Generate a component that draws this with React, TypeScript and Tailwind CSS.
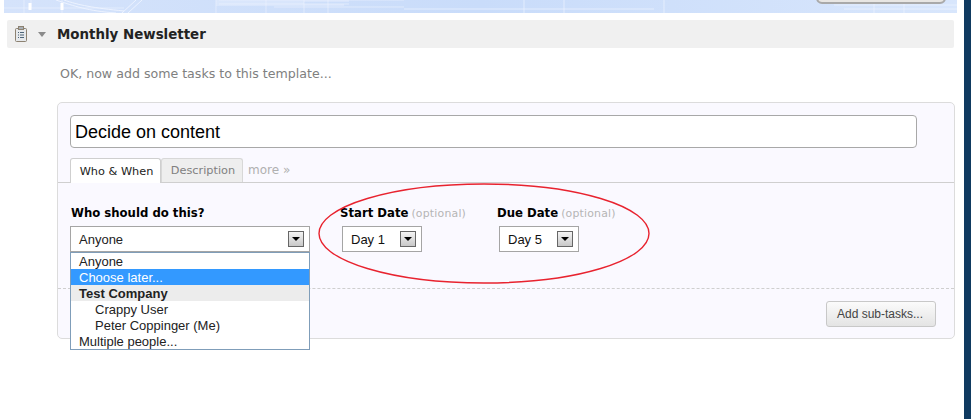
const verdana = "font-['DejaVu_Sans',sans-serif]";
const arial = "font-['Liberation_Sans',Arial,sans-serif]";

const Arrow = () => (
	<span className="flex h-[16px] w-[16px] items-center justify-center border border-[#666] bg-gradient-to-b from-[#f4f4f4] to-[#c8c8c8]">
		<span className="h-0 w-0 border-x-[4px] border-t-[4px] border-x-transparent border-t-black" />
	</span>
);

const TemplateIcon = () => (
	<svg width="14" height="16" viewBox="0 0 14 16" className="ml-[7px]" fill="none">
		<rect x="1.5" y="2.5" width="11" height="13" rx="1" fill="#e6e9ec" stroke="#8d8272" />
		<rect x="4.5" y="0.5" width="5" height="3" fill="#a9b0b6" stroke="#8d8272" />
		<path d="M4 6.5h1M6 6.5h4M4 9h1M6 9h4M4 11.5h1M6 11.5h4" stroke="#4d6478" />
	</svg>
);

const Banner = () => (
	<div className="relative ml-[4px] h-[13px] w-[953px] overflow-hidden bg-gradient-to-r from-[#d5e3fb] via-[#c9dcfa] to-[#d8e6fc]">
		<svg width="953" height="13" className="absolute inset-0" fill="none" stroke="#eef4ff" strokeWidth="1">
			<path d="M0 8H120M20 0v13M27 0v8M58 0v13M212 0v13M262 0v13M300 0v13M324 0v13M215 4H345M215 0H400M270 7H400" strokeOpacity="0.6" />
			<path d="M52 0C70 6 84 11 112 13M60 0C74 5 90 8 120 11M118 13L132 0M124 13L138 0" strokeOpacity="0.9" />
			<path d="M26 3v7M58 3v7" strokeWidth="3" stroke="#ffffff" />
			<path d="M212 1H345M212 3H300M212 5H340M400 9H650M520 0v13M560 0v13M660 13V0M830 5H953M840 9H953M870 0v13M900 0v13" strokeOpacity="0.7" />
		</svg>
		<div className="absolute right-[11px] top-[-10px] h-[14px] w-[130px] rounded-[6px] border-2 border-[#a9a9a9] bg-[#e8e6e3]" />
	</div>
);

const DateField = ({ label, value }: { label: string; value: string }) => (
	<div>
		<div className={`flex items-baseline gap-[3px] whitespace-nowrap text-[11.7px] font-bold leading-[15px] text-black ${verdana}`}>
			{label}
			<span className="text-[10.9px] font-normal tracking-[0.2px] text-[#b5b5b5]">(optional)</span>
		</div>
		<div className="ml-[2px] mt-[5px] flex h-[26px] w-[80px] items-center justify-between border border-[#a5a5a5] bg-white pl-[8px] pr-[5px]">
			<span className={`pt-[1px] text-[13px] text-[#111] ${arial}`}>{value}</span>
			<Arrow />
		</div>
	</div>
);

const menuRow = "h-[16px] leading-[18px]";

const AssigneeMenu = () => (
	<ul className={`absolute left-[70px] top-[252px] z-10 w-[240px] border border-[#7f9db9] bg-white text-[13px] text-[#222] ${arial}`}>
		<li className={`${menuRow} pl-[8px]`}>Anyone</li>
		<li className={`${menuRow} bg-[#3399ff] pl-[8px] text-white`}>Choose later...</li>
		<li className={`${menuRow} bg-[#ececec] pl-[8px] font-bold`}>Test Company</li>
		<li className={`${menuRow} pl-[24px]`}>Crappy User</li>
		<li className={`${menuRow} pl-[24px]`}>Peter Coppinger (Me)</li>
		<li className={`${menuRow} pl-[8px]`}>Multiple people...</li>
	</ul>
);

const App = () => {
	return (
		<div className="relative flex h-[419px] w-[971px] overflow-hidden bg-white">
			<main className="w-[964px]">
				<Banner />

				<div className="ml-[7px] mt-[7px] flex h-[28px] w-[947px] items-center rounded-[2px] bg-[#f0f0f0]">
					<TemplateIcon />
					<span className="ml-[10px] h-0 w-0 border-x-[4px] border-t-[5px] border-x-transparent border-t-[#8a8a8a]" />
					<h1 className={`ml-[11px] pt-[3px] text-[13.4px] font-bold text-[#222] ${verdana}`}>Monthly Newsletter</h1>
				</div>

				<p className={`ml-[60px] mt-[18px] text-[12.6px] leading-[15px] text-[#808080] ${verdana}`}>
					OK, now add some tasks to this template...
				</p>

				<section className="ml-[57px] mt-[21px] h-[237px] w-[898px] rounded-[5px] border border-[#dcdcdc] bg-[#faf9ff]">
					<input
						readOnly
						value="Decide on content"
						className={`ml-[12px] mt-[12px] block h-[33px] w-[847px] rounded-[4px] border border-[#a8a8a8] bg-white px-[4px] pt-[2px] text-[18px] text-black ${arial}`}
					/>

					<div className="mt-[10px] flex h-[25px] items-end border-b border-[#cfcfcf] pl-[12px]">
						<div className={`z-[1] -mb-px flex h-[25px] w-[91px] items-center justify-center rounded-t-[3px] border border-b-0 border-[#cfcfcf] bg-white pl-[2px] pt-[2px] text-[11.3px] text-[#222] ${verdana}`}>
							Who &amp; When
						</div>
						<div className={`flex h-[24px] w-[82px] items-center justify-center rounded-t-[3px] border border-b-0 border-[#d8d8d8] bg-[#eeeeee] pl-[2px] pt-[2px] text-[11.3px] text-[#808080] ${verdana}`}>
							Description
						</div>
						<span className={`ml-[5px] pb-[3px] text-[12px] font-medium text-[#b0b0b0] ${verdana}`}>more »</span>
					</div>

					<div className="flex pl-[12px] pt-[23px]">
						<div className="w-[270px]">
							<div className={`pl-[1px] text-[11.7px] font-bold leading-[15px] text-black ${verdana}`}>Who should do this?</div>
							<div className="mt-[5px] flex h-[26px] w-[240px] items-center justify-between border border-[#a5a5a5] bg-white pl-[8px] pr-[5px]">
								<span className={`pt-[1px] text-[13px] text-[#222] ${arial}`}>Anyone</span>
								<Arrow />
							</div>
						</div>
						<div className="w-[157px]">
							<DateField label="Start Date" value="Day 1" />
						</div>
						<DateField label="Due Date" value="Day 5" />
					</div>

					<div className="mt-[36px] border-t border-dashed border-[#cfcfcf]" />

					<div className="mt-[12px] flex justify-end pr-[18px]">
						<button className={`h-[26px] w-[110px] rounded-[3px] border border-[#c8c8c8] bg-gradient-to-b from-[#fbfbfb] to-[#e4e4e4] pr-[2px] text-[12px] text-[#444] ${arial}`}>
							Add sub-tasks...
						</button>
					</div>
				</section>
			</main>
			<aside className="h-full w-[7px] bg-[#0f3a60]" />

			<AssigneeMenu />

			{/* hand drawn annotation */}
			<svg width="971" height="419" className="pointer-events-none absolute inset-0 z-20" fill="none">
				<ellipse cx="484" cy="233.5" rx="165" ry="49.5" stroke="#e8232f" strokeWidth="1.4" />
			</svg>
		</div>
	);
};

export default App;
